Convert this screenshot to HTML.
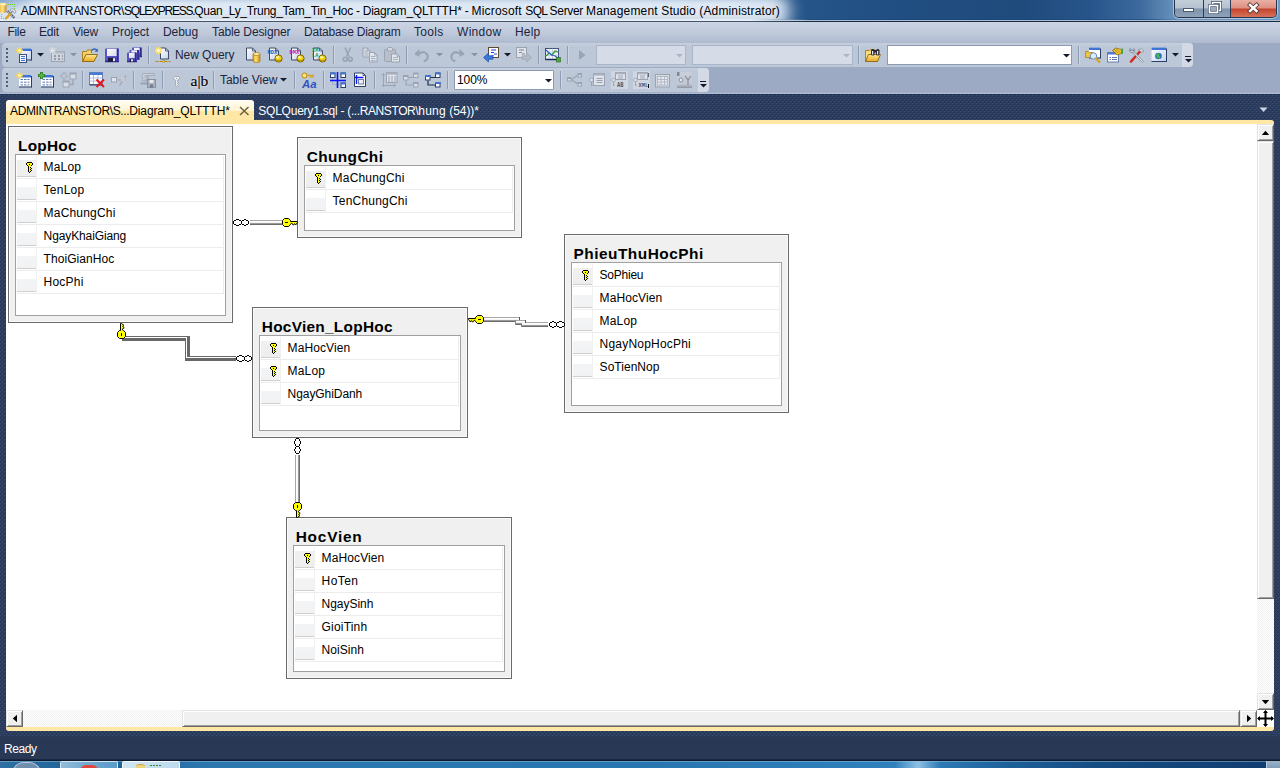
<!DOCTYPE html>
<html lang="en"><head><meta charset="utf-8"><title>Microsoft SQL Server Management Studio</title>
<style>
html,body{margin:0;padding:0;}
body{width:1280px;height:768px;overflow:hidden;position:relative;background:#293955;font-family:"Liberation Sans",sans-serif;font-size:12px;}
.a{position:absolute;}
.t{position:absolute;white-space:pre;font-family:"Liberation Sans",sans-serif;}
svg{position:absolute;overflow:visible;}
.tbl{position:absolute;background:#f0f0f0;border:1px solid #6a6a6a;box-sizing:border-box;box-shadow:inset 0 0 0 1px #fafafa;}
.grid{position:absolute;background:#fff;border:1px solid #a0a0a0;box-sizing:border-box;}
.rh{position:absolute;width:19px;height:20px;background:linear-gradient(#fff 0,#fff 8px,#f3f4f6 8px,#f1f2f4 100%);border-bottom:1px solid #cfcfcf;}
.rh1{background:linear-gradient(#fff 0,#fff 4px,#f0f0f0 4px,#eeeeef 100%);}
.rs{position:absolute;height:1px;background:#ececec;}
.vs{position:absolute;width:1px;background:#f0f0f0;}
.sbtn{position:absolute;width:17px;height:17px;box-sizing:border-box;background:#f0f0f0;border:1px solid;border-color:#e3e3e3 #696969 #696969 #e3e3e3;box-shadow:inset 1px 1px 0 #fff, inset -1px -1px 0 #a0a0a0;}
.sep{position:absolute;width:1px;background:#8d9bb3;box-shadow:1px 0 0 rgba(255,255,255,.28);}

</style></head>
<body>
<svg class="a" style="left:0;top:0" width="1280" height="768"><defs>
<pattern id="dots" width="4" height="4" patternUnits="userSpaceOnUse"><rect width="4" height="4" fill="#2b3c5c"/><rect x="0" y="3" width="1" height="1" fill="#3b4f74"/><rect x="2" y="1" width="1" height="1" fill="#3b4f74"/><rect x="2" y="0" width="1" height="1" fill="#263554"/><rect x="0" y="2" width="1" height="1" fill="#263554"/></pattern>
<pattern id="chk" width="2" height="2" patternUnits="userSpaceOnUse"><rect width="2" height="2" fill="#fff"/><rect x="0" y="0" width="1" height="1" fill="#f0f0f0"/><rect x="1" y="1" width="1" height="1" fill="#f0f0f0"/></pattern>
</defs><rect x="0" y="93" width="1280" height="645" fill="url(#dots)" shape-rendering="crispEdges"/><rect x="0" y="94" width="1280" height="1" fill="#243556"/></svg>
<div class="a" style="left:0;top:0;width:1280px;height:22px;overflow:hidden;background:linear-gradient(90deg,#2b5a90 0,#255589 800px,#214e82 900px,#1f4a7c 1020px,#27548a 1090px,#3d6a9d 1140px,#6790bb 1174px,#6b97c3 1276px,#6f9bc6 1280px)"><div class="a" style="left:-40px;top:-8px;width:830px;height:38px;border-radius:19px;background:#dde8f5;filter:blur(8px)"></div><div class="a" style="left:0;top:0;width:790px;height:20px;background:linear-gradient(rgba(201,216,234,.0) 0,rgba(223,233,245,.9) 5px,rgba(223,233,245,.9) 12px,rgba(210,219,231,.9) 19px);-webkit-mask-image:linear-gradient(90deg,#000 0,#000 730px,transparent 790px);mask-image:linear-gradient(90deg,#000 0,#000 730px,transparent 790px)"></div><div class="a" style="left:0;top:0;width:40px;height:14px;background:radial-gradient(ellipse at 0 0,rgba(120,155,200,.8) 0,rgba(120,155,200,0) 70%)"></div></div>
<div class="a" style="left:0;top:19px;width:1280px;height:1px;background:linear-gradient(90deg,#e4ebf4 0,#e4ebf4 750px,rgba(26,69,120,.6) 810px,rgba(26,69,120,.6) 1150px,rgba(26,69,120,0) 1180px)"></div>
<div class="a" style="left:0;top:20px;width:1280px;height:1px;background:linear-gradient(90deg,#e8eef5 0,#e8eef5 750px,#a9bbd0 810px,#a9bbd0 1280px)"></div>
<div class="a" style="left:0;top:21px;width:1280px;height:1px;background:linear-gradient(90deg,#45566f 0,#45566f 750px,#1c2b42 810px,#1c2b42 1280px)"></div>
<span class="t" style="left:20.80px;top:4.00px;font-size:12px;line-height:15px;font-weight:400;color:#000"><span style="letter-spacing:-0.328px">ADMINTRANSTOR\</span><span style="letter-spacing:-1.250px">SQLEXPRESS.</span><span style="letter-spacing:-0.317px">Quan_Ly_</span><span style="letter-spacing:-0.291px">Trung_Tam_Tin_Hoc - </span><span style="letter-spacing:-0.241px">Diagram_QLTTTH* - </span><span style="letter-spacing:0.178px">Microsoft </span><span style="letter-spacing:-0.652px">SQL </span><span style="letter-spacing:-0.327px">Server </span><span style="letter-spacing:0.174px">Management </span><span style="letter-spacing:0.092px">Studio </span><span style="letter-spacing:0.134px">(Administrator)</span></span>
<div class="a" style="left:1174px;top:0;width:103px;height:18px;border:1px solid #27364d;border-top:none;border-radius:0 0 5px 5px;box-sizing:border-box;overflow:hidden;box-shadow:0 0 0 1px rgba(255,255,255,.45)">
<div class="a" style="left:0;top:0;width:28px;height:17px;background:linear-gradient(#c3ced9 0,#b4c1cf 48%,#7f93ab 52%,#8ea3ba 100%);border-right:1px solid #2c3b52"></div>
<div class="a" style="left:29px;top:0;width:26px;height:17px;background:linear-gradient(#c3ced9 0,#b4c1cf 48%,#7f93ab 52%,#8ea3ba 100%);border-right:1px solid #2c3b52"></div>
<div class="a" style="left:56px;top:0;width:46px;height:17px;background:linear-gradient(#eab0a4 0,#dc8f80 48%,#c5432c 52%,#d5735c 100%)"></div>
</div>
<svg class="a" style="left:1174px;top:0" width="103" height="18">
<rect x="9.5" y="8.5" width="10" height="3" fill="#fff" stroke="#4b5a70"/>
<rect x="38.500" y="2.500" width="8" height="8" fill="none" stroke="#4b5a70" stroke-width="3"/><rect x="38.500" y="2.500" width="8" height="8" fill="none" stroke="#fff" stroke-width="1.4"/>
<rect x="35.5" y="5.5" width="8" height="7" fill="#9aa9bb" stroke="#4b5a70" stroke-width="3"/><rect x="35.5" y="5.5" width="8" height="7" fill="none" stroke="#fff" stroke-width="1.6"/>
<path d="M76 5 L82.500 11 M82.500 5 L76 11" stroke="#5a3a38" stroke-width="4.200" stroke-linecap="square"/><path d="M76 5 L82.500 11 M82.500 5 L76 11" stroke="#fff" stroke-width="2.400" stroke-linecap="square"/>
</svg>
<svg class="a" style="left:0;top:0" width="18" height="20"><defs><linearGradient id="gcy" x1="0" y1="0" x2="1" y2="0"><stop offset="0" stop-color="#f3c64a"/><stop offset=".45" stop-color="#fbe38c"/><stop offset="1" stop-color="#c98e14"/></linearGradient></defs><rect x="8" y="4" width="1" height="1" fill="#6fd626"/><rect x="10" y="4" width="1" height="1" fill="#6fd626"/><rect x="12" y="4" width="1" height="1" fill="#6fd626"/><rect x="14" y="4" width="1" height="1" fill="#6fd626"/><rect x="14" y="6" width="1" height="1" fill="#6fd626"/><rect x="14" y="8" width="1" height="1" fill="#6fd626"/><rect x="1" y="14" width="1" height="1" fill="#6fd626"/><rect x="1" y="16" width="1" height="1" fill="#6fd626"/><rect x="1" y="18" width="1" height="1" fill="#6fd626"/><rect x="3" y="18" width="1" height="1" fill="#6fd626"/>
<path d="M0 4.200a3.200 1.300 0 0 1 6.500 0v7.600a3.200 1.300 0 0 1 -6.500 0z" fill="url(#gcy)"/><ellipse cx="3.200" cy="4.200" rx="3.200" ry="1.300" fill="#fdeeb0"/>
<path d="M7 10.500l7.500 7.500" stroke="#4a5468" stroke-width="2.200"/><path d="M7 10.500l7.500 7.500" stroke="#eef1f6" stroke-width="1.200" stroke-dasharray="1 1"/>
<path d="M10 9.500q2.500 -2 5 .5l1 2.500 -2 .8 -1 -2 -2 .2z" fill="#e9edf3" stroke="#7d8798" stroke-width=".7"/>
<path d="M6 18.500l4.500 -5" stroke="#e0a21c" stroke-width="2.400" stroke-linecap="round"/><path d="M10.500 13.500l2.500 -2.800" stroke="#8d96a6" stroke-width="1.300"/></svg>
<div class="a" style="left:0;top:22px;width:1280px;height:21px;background:linear-gradient(#cbd4e3 0,#c1cadb 50%,#aebacf 100%)"></div>
<span class="t" style="left:7.50px;top:25.00px;font-size:12px;line-height:15px;font-weight:400;color:#1a2540;letter-spacing:-0.336px;">File</span>
<span class="t" style="left:39.00px;top:25.00px;font-size:12px;line-height:15px;font-weight:400;color:#1a2540;letter-spacing:-0.172px;">Edit</span>
<span class="t" style="left:73.00px;top:25.00px;font-size:12px;line-height:15px;font-weight:400;color:#1a2540;letter-spacing:-0.199px;">View</span>
<span class="t" style="left:112.00px;top:25.00px;font-size:12px;line-height:15px;font-weight:400;color:#1a2540;letter-spacing:-0.051px;">Project</span>
<span class="t" style="left:163.00px;top:25.00px;font-size:12px;line-height:15px;font-weight:400;color:#1a2540;letter-spacing:-0.075px;">Debug</span>
<span class="t" style="left:212.00px;top:25.00px;font-size:12px;line-height:15px;font-weight:400;color:#1a2540;letter-spacing:-0.110px;">Table Designer</span>
<span class="t" style="left:304.00px;top:25.00px;font-size:12px;line-height:15px;font-weight:400;color:#1a2540;letter-spacing:-0.223px;">Database Diagram</span>
<span class="t" style="left:414.00px;top:25.00px;font-size:12px;line-height:15px;font-weight:400;color:#1a2540;letter-spacing:0.297px;">Tools</span>
<span class="t" style="left:457.00px;top:25.00px;font-size:12px;line-height:15px;font-weight:400;color:#1a2540;letter-spacing:0.302px;">Window</span>
<span class="t" style="left:515.00px;top:25.00px;font-size:12px;line-height:15px;font-weight:400;color:#1a2540;letter-spacing:0.203px;">Help</span>
<div class="a" style="left:0;top:43px;width:1280px;height:51px;background:#9caac3"></div>
<div class="a" style="left:2px;top:43px;width:1191px;height:24px;border-radius:4px;background:linear-gradient(#c6cfde 0,#bcc7d8 4px,#bcc7d8 100%)"></div>
<div class="a" style="left:2px;top:68px;width:707px;height:24px;border-radius:4px;background:linear-gradient(#c6cfde 0,#bcc7d8 4px,#bcc7d8 100%)"></div>
<div class="a" style="left:1182px;top:43px;width:11px;height:24px;border-radius:0 4px 4px 0;background:#d3dae6"></div>
<div class="a" style="left:698px;top:68px;width:11px;height:24px;border-radius:0 4px 4px 0;background:#d3dae6"></div>
<div class="a" style="left:0;top:92px;width:1280px;height:1px;background:#a3b0c8"></div><div class="a" style="left:0;top:93px;width:1280px;height:1px;background:#aebad0"></div>
<span class="t" style="left:175.00px;top:48.00px;font-size:12px;line-height:15px;font-weight:400;color:#1a2540;letter-spacing:-0.059px;">New Query</span>
<span class="t" style="left:220.00px;top:73.00px;font-size:12px;line-height:15px;font-weight:400;color:#1a2540;letter-spacing:-0.033px;">Table View</span>
<div class="a" style="left:454px;top:70px;width:100px;height:20px;border-radius:1px;box-sizing:border-box;background:#fff;border:1px solid #8c9ab2"></div>
<span class="t" style="left:457.00px;top:73.00px;font-size:12px;line-height:15px;font-weight:400;color:#000;letter-spacing:-0.051px;">100%</span>
<div class="a" style="left:596px;top:45px;width:90px;height:20px;box-sizing:border-box;background:#d5dbe7;border:1px solid #aab5c9"></div>
<div class="a" style="left:692px;top:45px;width:161px;height:20px;box-sizing:border-box;background:#d5dbe7;border:1px solid #aab5c9"></div>
<div class="a" style="left:887px;top:45px;width:185px;height:20px;box-sizing:border-box;background:#fff;border:1px solid #8c9ab2"></div>
<svg class="a" width="0" height="0"><defs><linearGradient id="gsh" x1="0" y1="0" x2="1" y2="1"><stop offset="0" stop-color="#fff"/><stop offset="1" stop-color="#aab4d8"/></linearGradient><linearGradient id="gfold" x1="0" y1="0" x2="0" y2="1"><stop offset="0" stop-color="#ffe89a"/><stop offset="1" stop-color="#e9a81c"/></linearGradient><linearGradient id="gcyl" x1="0" y1="0" x2="1" y2="0"><stop offset="0" stop-color="#d99a10"/><stop offset=".4" stop-color="#ffe27a"/><stop offset="1" stop-color="#d08c0a"/></linearGradient><linearGradient id="gdoc" x1="0" y1="0" x2="1" y2="1"><stop offset="0" stop-color="#ffffff"/><stop offset="1" stop-color="#c5d2ee"/></linearGradient></defs></svg><svg class="a" style="left:6px;top:48px" width="2" height="14" viewBox="0 0 2 14"><rect x="0" y="0" width="2" height="2" fill="#4d5d7c"/><rect x="0" y="4" width="2" height="2" fill="#4d5d7c"/><rect x="0" y="8" width="2" height="2" fill="#4d5d7c"/><rect x="0" y="12" width="2" height="2" fill="#4d5d7c"/></svg><svg class="a" style="left:16px;top:47px" width="16" height="16" viewBox="0 0 16 16"><rect x="5" y="1.5" width="10" height="11" fill="url(#gdoc)"/><rect x="5" y="1.5" width="10" height="2.500" fill="#3f73d6"/><path d="M5 13.0h10.5M15.5 2.5v11" stroke="#2b3f66" fill="none"/><rect x="3.500" y="7.500" width="7" height="8" fill="#f3f6fd" stroke="#3d4f78"/><path d="M5 9.500h4M5 11.500h4M5 13.500h4" stroke="#3f73d6" stroke-width="1"/><path d="M3.5 0.0v7M0.0 3.5h7M1.0 1.0l5 5M6.0 1.0l-5 5" stroke="#ffd84a" stroke-width="1.300"/><circle cx="3.5" cy="3.5" r="1.300" fill="#fff6c2"/></svg><svg class="a" style="left:37px;top:53px" width="7" height="4" viewBox="0 0 7 4"><path d="M0 0h7l-3.500 3.500z" fill="#111a2e"/></svg><svg class="a" style="left:49px;top:47px" width="16" height="16" viewBox="0 0 16 16"><rect x="2.500" y="4.500" width="13" height="10" fill="#cfd4dd" stroke="#9aa3b2"/><rect x="2.500" y="4.500" width="13" height="2" fill="#b4bac6"/><path d="M5 9h2M9 9h2M13 9h1M5 12h2M9 12h2M13 12h1" stroke="#7f8898" stroke-width="1.500"/><path d="M3.5 0.0v7M0.0 3.5h7M1.0 1.0l5 5M6.0 1.0l-5 5" stroke="#d4d8e0" stroke-width="1.300"/><circle cx="3.5" cy="3.5" r="1.300" fill="#e8eaf0"/></svg><svg class="a" style="left:70px;top:53px" width="7" height="4" viewBox="0 0 7 4"><path d="M0 0h7l-3.500 3.500z" fill="#8b93a3"/></svg><svg class="a" style="left:82px;top:47px" width="16" height="16" viewBox="0 0 16 16"><path d="M0.500 14.500V4.500h4l1 -1.500h4v3" fill="#f3cf6a" stroke="#a87a14" stroke-width=".9"/><path d="M0.500 14.500L4 7.500h11.500L12 14.500z" fill="url(#gfold)" stroke="#8a6410" stroke-width=".9"/><path d="M9.500 3.500q3 -3 5.500 0" fill="none" stroke="#2f62b8" stroke-width="1.300"/><path d="M15.800 1.500v3.200h-3.200z" fill="#2f62b8"/></svg><svg class="a" style="left:104px;top:47px" width="16" height="16" viewBox="0 0 16 16"><rect x="1" y="1.5" width="14" height="13.5" rx="0.800" fill="#5a55c8"/><path d="M13.5 1.5v13.5M1 14.5h14" stroke="#2f2a8a" stroke-width="1.500"/><rect x="3" y="2.0" width="9.5" height="7.0" fill="#fff"/><rect x="3" y="2.0" width="9.5" height="7.0" fill="url(#gsh)" opacity=".5"/><rect x="4" y="10.7" width="7.5" height="4.0" fill="#1c1c3a"/><rect x="9" y="11.2" width="2" height="3.0" fill="#e8e8f4"/></svg><svg class="a" style="left:126px;top:47px" width="16" height="16" viewBox="0 0 16 16"><rect x="6" y="0.5" width="10" height="9.5" rx="0.800" fill="#5a55c8"/><path d="M14.5 0.5v9.5M6 9.5h10" stroke="#2f2a8a" stroke-width="1.500"/><rect x="8" y="1.0" width="5.5" height="4.9" fill="#fff"/><rect x="8" y="1.0" width="5.5" height="4.9" fill="url(#gsh)" opacity=".5"/><rect x="9" y="7.0" width="3.5" height="2.9" fill="#1c1c3a"/><rect x="10" y="7.3" width="2" height="2.1" fill="#e8e8f4"/><rect x="3.5" y="3" width="10" height="9.5" rx="0.800" fill="#5a55c8"/><path d="M12.0 3v9.5M3.5 12.0h10" stroke="#2f2a8a" stroke-width="1.500"/><rect x="5.5" y="3.5" width="5.5" height="4.9" fill="#fff"/><rect x="5.5" y="3.5" width="5.5" height="4.9" fill="url(#gsh)" opacity=".5"/><rect x="6.5" y="9.5" width="3.5" height="2.9" fill="#1c1c3a"/><rect x="7.5" y="9.8" width="2" height="2.1" fill="#e8e8f4"/><rect x="1" y="5.5" width="10" height="9.5" rx="0.800" fill="#5a55c8"/><path d="M9.5 5.5v9.5M1 14.5h10" stroke="#2f2a8a" stroke-width="1.500"/><rect x="3" y="6.0" width="5.5" height="4.9" fill="#fff"/><rect x="3" y="6.0" width="5.5" height="4.9" fill="url(#gsh)" opacity=".5"/><rect x="4" y="12.0" width="3.5" height="2.9" fill="#1c1c3a"/><rect x="5" y="12.3" width="2" height="2.1" fill="#e8e8f4"/></svg><div class="sep" style="left:148px;top:46px;height:18px"></div><svg class="a" style="left:155px;top:47px" width="16" height="16" viewBox="0 0 16 16"><path d="M5.5 1.0h5l3 3v8h-8z" fill="url(#gdoc)" stroke="#3f4a63" stroke-width="1"/><path d="M10.5 1.0v3h3" fill="none" stroke="#3f4a63" stroke-width=".8"/><path d="M0.500 14.500h15" stroke="#b8860b" stroke-width="1" stroke-dasharray="3 1 8 1 3"/><path d="M8.500 12.500v2" stroke="#b8860b"/><circle cx="8.500" cy="14.500" r="1.100" fill="#ffe000" stroke="#a87a14" stroke-width=".5"/><path d="M3.5 0.0v7M0.0 3.5h7M1.0 1.0l5 5M6.0 1.0l-5 5" stroke="#ffb400" stroke-width="1.300"/><circle cx="3.5" cy="3.5" r="1.300" fill="#fff2a0"/><circle cx="3.500" cy="3.500" r="2.600" fill="#ffc928" opacity=".75"/><path d="M3.5 0.0v7M0.0 3.5h7M1.0 1.0l5 5M6.0 1.0l-5 5" stroke="#ffe680" stroke-width="1.300"/><circle cx="3.5" cy="3.5" r="1.300" fill="#fff"/></svg><svg class="a" style="left:245px;top:47px" width="16" height="16" viewBox="0 0 16 16"><path d="M1.5 1.0h6l3 3v9h-9z" fill="url(#gdoc)" stroke="#3f4a63" stroke-width="1"/><path d="M7.5 1.0v3h3" fill="none" stroke="#3f4a63" stroke-width=".8"/><path d="M8 7v7a3.500 1.500 0 0 0 7 0v-7z" fill="url(#gcyl)" stroke="#a87a14" stroke-width=".7"/><ellipse cx="11.500" cy="7" rx="3.500" ry="1.500" fill="#ffe9a0" stroke="#a87a14" stroke-width=".7"/></svg><svg class="a" style="left:267px;top:47px" width="16" height="16" viewBox="0 0 16 16"><path d="M2.5 1.0h6l3 3v9h-9z" fill="url(#gdoc)" stroke="#3f4a63" stroke-width="1"/><path d="M8.5 1.0v3h3" fill="none" stroke="#3f4a63" stroke-width=".8"/><text x="0.5" y="6.5" font-family="Liberation Mono,monospace" font-weight="700" font-size="6" fill="#1c5cc0" textLength="9.6" lengthAdjust="spacingAndGlyphs">MDX</text><circle cx="11.5" cy="11.5" r="3.6" fill="#f2d20a" stroke="#7a5c00" stroke-width=".9"/><ellipse cx="10.7" cy="10.3" rx="1.700" ry="1.100" fill="#fff9b0"/><path d="M7.9 12.0a3.6 1.600 0 0 0 7.2 0" fill="none" stroke="#7a5c00" stroke-width=".6"/></svg><svg class="a" style="left:289px;top:47px" width="16" height="16" viewBox="0 0 16 16"><path d="M2.5 1.0h6l3 3v9h-9z" fill="url(#gdoc)" stroke="#3f4a63" stroke-width="1"/><path d="M8.5 1.0v3h3" fill="none" stroke="#3f4a63" stroke-width=".8"/><text x="0.5" y="6.5" font-family="Liberation Mono,monospace" font-weight="700" font-size="6" fill="#c020b0" textLength="9.6" lengthAdjust="spacingAndGlyphs">DMX</text><circle cx="11.5" cy="11.5" r="3.6" fill="#f2d20a" stroke="#7a5c00" stroke-width=".9"/><ellipse cx="10.7" cy="10.3" rx="1.700" ry="1.100" fill="#fff9b0"/><path d="M7.9 12.0a3.6 1.600 0 0 0 7.2 0" fill="none" stroke="#7a5c00" stroke-width=".6"/></svg><svg class="a" style="left:311px;top:47px" width="16" height="16" viewBox="0 0 16 16"><path d="M2.5 1.0h6l3 3v9h-9z" fill="url(#gdoc)" stroke="#3f4a63" stroke-width="1"/><path d="M8.5 1.0v3h3" fill="none" stroke="#3f4a63" stroke-width=".8"/><text x="1" y="5" font-family="Liberation Mono,monospace" font-weight="700" font-size="5.5" fill="#1f9a50" textLength="6.4" lengthAdjust="spacingAndGlyphs">XM</text><text x="1" y="10" font-family="Liberation Mono,monospace" font-weight="700" font-size="5.5" fill="#1f9a50" textLength="6.4" lengthAdjust="spacingAndGlyphs">LA</text><circle cx="11.5" cy="11.5" r="3.6" fill="#f2d20a" stroke="#7a5c00" stroke-width=".9"/><ellipse cx="10.7" cy="10.3" rx="1.700" ry="1.100" fill="#fff9b0"/><path d="M7.9 12.0a3.6 1.600 0 0 0 7.2 0" fill="none" stroke="#7a5c00" stroke-width=".6"/></svg><div class="sep" style="left:333px;top:46px;height:18px"></div><svg class="a" style="left:341px;top:47px" width="16" height="16" viewBox="0 0 16 16"><path d="M4 0.500L7.800 9.500M9.500 0.500L5.700 9.500" stroke="#9aa3b2" stroke-width="1.600" fill="none"/><circle cx="4.200" cy="12.200" r="1.900" fill="none" stroke="#9aa3b2" stroke-width="1.600"/><circle cx="9.300" cy="12.200" r="1.900" fill="none" stroke="#9aa3b2" stroke-width="1.600"/></svg><svg class="a" style="left:362px;top:47px" width="16" height="16" viewBox="0 0 16 16"><path d="M1.0 1.0h4.5l2.5 2.5v6.5h-7z" fill="#d9dde6" stroke="#9aa3b2" stroke-width="1"/><path d="M5.5 1.0v2.5h2.5" fill="none" stroke="#9aa3b2" stroke-width=".8"/><path d="M2.500 4h4M2.500 6h4M2.500 8h4" stroke="#9aa3b2" stroke-width=".8"/><path d="M7.5 5.5h5.0l2.5 2.5v7.0h-7.5z" fill="#e1e5ec" stroke="#9aa3b2" stroke-width="1"/><path d="M12.5 5.5v2.5h2.5" fill="none" stroke="#9aa3b2" stroke-width=".8"/><path d="M9 9.500h4.500M9 11.500h4.500M9 13.500h4.500" stroke="#9aa3b2" stroke-width=".8"/></svg><svg class="a" style="left:384px;top:47px" width="16" height="16" viewBox="0 0 16 16"><rect x="0.500" y="2.500" width="11" height="12" rx="1" fill="#b9bfca" stroke="#9aa3b2"/><rect x="3.500" y="0.500" width="5" height="3.500" rx="1" fill="#d5d9e1" stroke="#9aa3b2"/><path d="M7.5 7.0h5.5l2.5 2.5v5.5h-8z" fill="#e1e5ec" stroke="#9aa3b2" stroke-width="1"/><path d="M13.0 7.0v2.5h2.5" fill="none" stroke="#9aa3b2" stroke-width=".8"/><path d="M9 10.500h5M9 12.500h5" stroke="#9aa3b2" stroke-width=".8"/></svg><div class="sep" style="left:406px;top:46px;height:18px"></div><svg class="a" style="left:414px;top:47px" width="16" height="16" viewBox="0 0 16 16"><path d="M2 5.500h6.500a4.500 4.500 0 0 1 0 9h-1" fill="none" stroke="#9aa3b2" stroke-width="2.200" transform="rotate(-20 8 8)"/><path d="M0.500 6.500l5 -4.500v8z" fill="#9aa3b2"/></svg><svg class="a" style="left:436px;top:53px" width="7" height="4" viewBox="0 0 7 4"><path d="M0 0h7l-3.500 3.500z" fill="#8b93a3"/></svg><svg class="a" style="left:449px;top:47px" width="16" height="16" viewBox="0 0 16 16"><path d="M14 5.500h-6.500a4.500 4.500 0 0 0 0 9h1" fill="none" stroke="#9aa3b2" stroke-width="2.200" transform="rotate(20 8 8)"/><path d="M15.500 6.500l-5 -4.500v8z" fill="#9aa3b2"/></svg><svg class="a" style="left:471px;top:53px" width="7" height="4" viewBox="0 0 7 4"><path d="M0 0h7l-3.500 3.500z" fill="#8b93a3"/></svg><svg class="a" style="left:483px;top:47px" width="16" height="16" viewBox="0 0 16 16"><rect x="5.500" y="0.500" width="10" height="10" fill="#fff" stroke="#5a4a32"/><path d="M8 3h5M8 5.500h3M11 7h3" stroke="#1c3fe0" stroke-width="1.200"/><path d="M8 8.500h3" stroke="#9aa" stroke-width="1"/><path d="M0.500 10.500l5 -4.500v2.800h4.500v3.400h-4.500v2.800z" fill="#3b78d8" stroke="#1d4fa8" stroke-width=".7"/></svg><svg class="a" style="left:504px;top:53px" width="7" height="4" viewBox="0 0 7 4"><path d="M0 0h7l-3.500 3.500z" fill="#111a2e"/></svg><svg class="a" style="left:516px;top:47px" width="16" height="16" viewBox="0 0 16 16"><rect x="0.500" y="0.500" width="10" height="10" fill="#dfe3ea" stroke="#9aa3b2"/><path d="M3 3h5M3 5.500h3M6 7h3" stroke="#7f8898" stroke-width="1.100"/><path d="M15.500 10.500l-5 -4.500v2.800h-4.500v3.400h4.500v2.800z" fill="#b4bac6" stroke="#9aa3b2" stroke-width=".7"/></svg><div class="sep" style="left:538px;top:46px;height:18px"></div><svg class="a" style="left:545px;top:47px" width="16" height="16" viewBox="0 0 16 16"><rect x="0.500" y="1.500" width="13" height="11" fill="#f6f8fc" stroke="#3b4d78"/><path d="M0.500 5h13M0.500 8.500h13M4 1.500v11M7.500 1.500v11M11 1.500v11" stroke="#b7c3dc" stroke-width=".7"/><path d="M0.500 12.500h13.500" stroke="#1d2c52" stroke-width="1.500"/><path d="M1 9l3 -3 3 2 3 -4 3 1" fill="none" stroke="#2f9a30" stroke-width="1.300"/><path d="M1 3l3 3 3 2 3 1 3 2" fill="none" stroke="#2f62d8" stroke-width="1.200"/><rect x="11.500" y="10.500" width="4" height="4.500" fill="#4fa83a" stroke="#2a6a1c" stroke-width=".6"/></svg><div class="sep" style="left:567px;top:46px;height:18px"></div><svg class="a" style="left:578px;top:47px" width="8" height="16" viewBox="0 0 8 16"><path d="M1 3v10l6.500 -5z" fill="#9aa3b2"/></svg><svg class="a" style="left:676px;top:54px" width="7" height="4" viewBox="0 0 7 4"><path d="M0 0h7l-3.500 3.500z" fill="#aeb6c6"/></svg><svg class="a" style="left:843px;top:54px" width="7" height="4" viewBox="0 0 7 4"><path d="M0 0h7l-3.500 3.500z" fill="#aeb6c6"/></svg><div class="sep" style="left:858px;top:46px;height:18px"></div><svg class="a" style="left:865px;top:47px" width="16" height="16" viewBox="0 0 16 16"><path d="M0.500 14.500V3.500h4l1 -1h4v3" fill="#f7dc7e" stroke="#a87a14" stroke-width=".9"/><path d="M0.500 14.500L3.500 7.500h12L12.500 14.500z" fill="url(#gfold)" stroke="#8a6410" stroke-width=".9"/><rect x="6" y="2" width="3.500" height="6.500" rx="1.500" fill="#2b2b33"/><rect x="11" y="2" width="3.500" height="6.500" rx="1.500" fill="#2b2b33"/><rect x="9" y="3" width="2.500" height="2.500" fill="#2b2b33"/><rect x="7" y="4" width="1.200" height="3.500" fill="#e9eef6"/><rect x="12" y="4" width="1.200" height="3.500" fill="#e9eef6"/></svg><svg class="a" style="left:1063px;top:54px" width="7" height="4" viewBox="0 0 7 4"><path d="M0 0h7l-3.500 3.500z" fill="#111a2e"/></svg><div class="sep" style="left:1078px;top:46px;height:18px"></div><svg class="a" style="left:1085px;top:47px" width="16" height="16" viewBox="0 0 16 16"><rect x="4" y="0.5" width="11" height="10" fill="#fff"/><rect x="4" y="0.5" width="11" height="2.500" fill="#3f73d6"/><path d="M4 11.0h11.5M15.5 1.5v10" stroke="#2b3f66" fill="none"/><path d="M0.500 4.500h3l1 1h3.500v5h-7.500z" fill="#f0c040" stroke="#a87a14" stroke-width=".7"/><circle cx="8.500" cy="9" r="3.200" fill="#d8ecfb" stroke="#6f8fb8" stroke-width="1"/><path d="M11 11.500l3.500 3.500" stroke="#d6a320" stroke-width="2.200" stroke-linecap="round"/></svg><svg class="a" style="left:1107px;top:47px" width="16" height="16" viewBox="0 0 16 16"><rect x="0.500" y="5.500" width="11" height="9.500" fill="#fff" stroke="#6a7fa8"/><rect x="0.500" y="5.500" width="11" height="2" fill="#4a7ad8"/><path d="M2.500 10.500h1.500M5 10.500h5M2.500 12.500h1.500M5 12.500h5" stroke="#5b79b5" stroke-width="1"/><path d="M5.500 3.500l3 -2.500 6 1.500v4l-4.500 1.500z" fill="#f2c52e" stroke="#8a6410" stroke-width=".7"/><path d="M5.500 3.500l4 3.500M7 2l4 4M9 1.500l4 4" stroke="#8a6410" stroke-width=".6"/><rect x="14.500" y="1.500" width="1.500" height="5.500" fill="#3aa84a"/></svg><svg class="a" style="left:1129px;top:47px" width="16" height="16" viewBox="0 0 16 16"><path d="M2 14.500l9 -10" stroke="#d42a20" stroke-width="2.600" stroke-linecap="round"/><path d="M2.500 3l11 11.500" stroke="#8f98a8" stroke-width="2.200" stroke-linecap="round"/><path d="M2.500 3l11 11.500" stroke="#f1f3f7" stroke-width=".9" stroke-linecap="round"/><path d="M9.500 2.500q3 -2 5.500 1.500l-2 1.500q-1 -2 -3 -1.500z" fill="#dfe4ec" stroke="#7a8498" stroke-width=".7"/><path d="M1 1.500a2.600 2.600 0 1 0 4 0v2h-4z" fill="#c9cfda" stroke="#7a8498" stroke-width=".7"/></svg><svg class="a" style="left:1151px;top:47px" width="16" height="16" viewBox="0 0 16 16"><rect x="0.5" y="0.5" width="14.5" height="13.5" fill="url(#gdoc)"/><rect x="0.5" y="0.5" width="14.5" height="2.500" fill="#3f73d6"/><path d="M0.5 14.5h15.0M15.5 1.5v13.5" stroke="#2b3f66" fill="none"/><circle cx="7.500" cy="9" r="3.300" fill="#2f66d0"/><path d="M5 8q1.500 -2.500 3.500 -2l-0.500 2.500 1.500 1 -1 2.500q-2.500 0 -3.500 -4z" fill="#3fb848"/></svg><svg class="a" style="left:1172px;top:53px" width="7" height="4" viewBox="0 0 7 4"><path d="M0 0h7l-3.500 3.500z" fill="#111a2e"/></svg><svg class="a" style="left:1185px;top:56px" width="7" height="8" viewBox="0 0 7 8"><path d="M0 0.500h6" stroke="#111a2e" stroke-width="1"/><path d="M0 3h7l-3.500 3.500z" fill="#111a2e"/></svg><svg class="a" style="left:6px;top:73px" width="2" height="14" viewBox="0 0 2 14"><rect x="0" y="0" width="2" height="2" fill="#4d5d7c"/><rect x="0" y="4" width="2" height="2" fill="#4d5d7c"/><rect x="0" y="8" width="2" height="2" fill="#4d5d7c"/><rect x="0" y="12" width="2" height="2" fill="#4d5d7c"/></svg><svg class="a" style="left:16px;top:72px" width="16" height="16" viewBox="0 0 16 16"><rect x="3" y="3" width="12" height="11.5" fill="#fff"/><rect x="3" y="3" width="12" height="2.500" fill="#3f73d6"/><path d="M4.5 7.5h2.500M8 7.5h2.500M11.5 7.5h2" stroke="#5b79b5" stroke-width="1"/><path d="M4.5 10.2h2.500M8 10.2h2.500M11.5 10.2h2" stroke="#5b79b5" stroke-width="1"/><path d="M4.5 12.9h2.500M8 12.9h2.500M11.5 12.9h2" stroke="#5b79b5" stroke-width="1"/><path d="M3 15.0h12.5M15.5 4v11.5" stroke="#2b3f66" stroke-width="1" fill="none"/><path d="M3.5 0.0v7M0.0 3.5h7M1.0 1.0l5 5M6.0 1.0l-5 5" stroke="#ffd84a" stroke-width="1.300"/><circle cx="3.5" cy="3.5" r="1.300" fill="#fff6c2"/></svg><svg class="a" style="left:38px;top:72px" width="16" height="16" viewBox="0 0 16 16"><rect x="3" y="3" width="12" height="11.5" fill="#fff"/><rect x="3" y="3" width="12" height="2.500" fill="#3f73d6"/><path d="M4.5 7.5h2.500M8 7.5h2.500M11.5 7.5h2" stroke="#5b79b5" stroke-width="1"/><path d="M4.5 10.2h2.500M8 10.2h2.500M11.5 10.2h2" stroke="#5b79b5" stroke-width="1"/><path d="M4.5 12.9h2.500M8 12.9h2.500M11.5 12.9h2" stroke="#5b79b5" stroke-width="1"/><path d="M3 15.0h12.5M15.5 4v11.5" stroke="#2b3f66" stroke-width="1" fill="none"/><path d="M3.500 0v7M0 3.500h7" stroke="#2f7d2a" stroke-width="3"/><path d="M3.500 0.800v5.400M0.800 3.500h5.400" stroke="#58c04a" stroke-width="1.400"/></svg><svg class="a" style="left:60px;top:72px" width="16" height="16" viewBox="0 0 16 16"><path d="M4 0.500v7M0.500 4h7" stroke="#9aa3b2" stroke-width="2.600"/><path d="M4 1.500v5M1.500 4h5" stroke="#d4d8df" stroke-width="1"/><rect x="10.0" y="1.0" width="6" height="6" fill="#d9dde5" stroke="#9aa3b2"/><rect x="10.0" y="1.0" width="6" height="1.500" fill="#9aa3b2"/><rect x="3.0" y="9.0" width="6" height="6" fill="#d9dde5" stroke="#9aa3b2"/><rect x="3.0" y="9.0" width="6" height="1.500" fill="#9aa3b2"/><path d="M13 7.500v5h-3.500" fill="none" stroke="#9aa3b2" stroke-width="1.300"/></svg><div class="sep" style="left:82px;top:71px;height:18px"></div><svg class="a" style="left:89px;top:72px" width="16" height="16" viewBox="0 0 16 16"><rect x="0.500" y="0.500" width="13" height="12" fill="#fff" stroke="#6a7fa8"/><rect x="0.500" y="0.500" width="13" height="2.500" fill="#4a7ad8"/><path d="M0.500 6h13M0.500 9h13M4.500 3v9.500M9 3v9.500" stroke="#9fb1d4" stroke-width=".8"/><path d="M0.500 13h13.500" stroke="#2b3f66"/><path d="M7.500 7.500l7.500 7.500M15 7.500l-7.500 7.500" stroke="#e8141c" stroke-width="2"/></svg><svg class="a" style="left:111px;top:72px" width="16" height="16" viewBox="0 0 16 16"><rect x="0.500" y="5.500" width="5" height="4.500" fill="#dfe3ea" stroke="#9aa3b2"/><path d="M7 8h8" stroke="#9aa3b2" stroke-width="1"/><path d="M8.500 13.500l6.500 -10" stroke="#9aa3b2" stroke-width="1.300"/><rect x="10" y="5.500" width="4" height="4" fill="#cfd4dd" opacity=".7"/></svg><div class="sep" style="left:133px;top:71px;height:18px"></div><svg class="a" style="left:140px;top:72px" width="16" height="16" viewBox="0 0 16 16"><path d="M4 1.500h9q2 0 1.500 2h-8q2 3 0 5.500h-4.500q2 -3 0 -5.500q0 -2 2 -2z" fill="#ccd1da" stroke="#9aa3b2" stroke-width=".8"/><path d="M4 4h5M4.500 6h5M4 8h4" stroke="#9aa3b2" stroke-width=".7"/><path d="M0.500 11.500h8" stroke="#9aa3b2" stroke-width="2"/><rect x="7.500" y="7.500" width="8" height="8" fill="#a9b0bd" stroke="#7f8898" stroke-width=".8"/><rect x="9.500" y="8" width="4" height="3" fill="#e4e7ed"/><rect x="10" y="12.500" width="3" height="3" fill="#737c8c"/></svg><div class="sep" style="left:162px;top:71px;height:18px"></div><svg class="a" style="left:173px;top:76px" width="7" height="11" viewBox="0 0 7 11"><g shape-rendering="crispEdges"><path d="M1 0h5v1h1v2h-1v1h-1v2h1v1h-1v1h1v1h-1v1h-1v1h-1v-1h-1v-6h-1v-1h-1v-2h1z" fill="#a9afbb"/><path d="M1 1h5v2h-1v1h-1v2h1v1h-1v1h1v1h-1v1h-1v-6h-1v-1h-1z" fill="#e6e9ee"/><rect x="3" y="2" width="1" height="1" fill="#a9afbb"/></g></svg><span class="t" style="left:190.5px;top:71px;font-family:'Liberation Serif',serif;font-size:15.5px;line-height:20px;color:#000;-webkit-text-stroke:.15px #000;text-shadow:0 0 2px #e6ebf3,0 0 2px #e6ebf3">a|b</span><div class="sep" style="left:213px;top:71px;height:18px"></div><svg class="a" style="left:280px;top:78px" width="7" height="4" viewBox="0 0 7 4"><path d="M0 0h7l-3.500 3.500z" fill="#111a2e"/></svg><div class="sep" style="left:294px;top:71px;height:18px"></div><svg class="a" style="left:301px;top:72px" width="16" height="16" viewBox="0 0 16 16"><circle cx="3.500" cy="3.500" r="2.500" fill="#ffe27a" stroke="#b8860b" stroke-width="1"/><path d="M5.500 3.500h7.500M10 3.500v2.200M12 3.500v2.200" stroke="#d6a320" stroke-width="1.400"/><text x="1" y="15.500" font-family="Liberation Sans,sans-serif" font-style="italic" font-weight="700" font-size="11.500" fill="#2f52c0" textLength="14.500" lengthAdjust="spacingAndGlyphs">Aa</text></svg><div class="sep" style="left:323px;top:71px;height:18px"></div><svg class="a" style="left:330px;top:72px" width="16" height="16" viewBox="0 0 16 16"><rect x="0.5" y="1.0" width="4.5" height="4.5" fill="#fff" stroke="#2b3f66"/><rect x="0" y="0.5" width="5.5" height="2" fill="#3f73d6"/><rect x="11.0" y="1.0" width="4.5" height="4.5" fill="#fff" stroke="#2b3f66"/><rect x="10.5" y="0.5" width="5.5" height="2" fill="#3f73d6"/><rect x="11.0" y="11.0" width="4.5" height="4.5" fill="#fff" stroke="#2b3f66"/><rect x="10.5" y="10.5" width="5.5" height="2" fill="#3f73d6"/><path d="M2.500 6v6.500h8" fill="none" stroke="#9fb1d4"/><path d="M7.500 0v16M0 8.500h16" stroke="#0a14ff" stroke-width="1.600"/></svg><svg class="a" style="left:353px;top:72px" width="16" height="16" viewBox="0 0 16 16"><path d="M1.5 1.0h8.5l2.5 2.5v11.0h-11z" fill="#fff" stroke="#2b3f66" stroke-width="1"/><path d="M10.0 1.0v2.5h2.5" fill="none" stroke="#2b3f66" stroke-width=".8"/><rect x="5.500" y="7.500" width="5" height="4.500" fill="#e9eef8" stroke="#6a7fa8"/><path d="M3.500 3v9M2 5.500h8.500" stroke="#0a14ff" stroke-width="1.400"/></svg><div class="sep" style="left:374px;top:71px;height:18px"></div><svg class="a" style="left:381px;top:72px" width="16" height="16" viewBox="0 0 16 16"><rect x="5.500" y="0.500" width="10.500" height="10" fill="#dfe3ea" stroke="#9aa3b2"/><rect x="5.500" y="0.500" width="10.500" height="2.200" fill="#aab1be"/><path d="M7 5h2M10 5h2M13 5h2M7 7h2M10 7h2M13 7h2M7 9h2M10 9h2M13 9h2" stroke="#9aa3b2" stroke-width="1"/><path d="M2.500 1.500v13.500M1 13.500h13.500M1 3.500l1.500 -2 1.500 2M12.500 12l2 1.500-2 1.500" fill="none" stroke="#9aa3b2" stroke-width="1"/></svg><svg class="a" style="left:403px;top:72px" width="16" height="16" viewBox="0 0 16 16"><rect x="0.5" y="3.5" width="4.5" height="4.5" fill="#d9dde5" stroke="#9aa3b2"/><rect x="0.5" y="3.5" width="4.5" height="1.500" fill="#9aa3b2"/><rect x="10.5" y="1.0" width="4.5" height="4.5" fill="#d9dde5" stroke="#9aa3b2"/><rect x="10.5" y="1.0" width="4.5" height="1.500" fill="#9aa3b2"/><rect x="10.5" y="10.5" width="4.5" height="4.5" fill="#d9dde5" stroke="#9aa3b2"/><rect x="10.5" y="10.5" width="4.5" height="1.500" fill="#9aa3b2"/><path d="M5.500 5.500h4.500M3 8.500v4.500h7" fill="none" stroke="#9aa3b2" stroke-width="1.200"/></svg><svg class="a" style="left:425px;top:72px" width="16" height="16" viewBox="0 0 16 16"><rect x="0.5" y="3.5" width="4.5" height="4.5" fill="#fff" stroke="#2b3f66"/><rect x="0" y="3" width="5.5" height="2" fill="#3f73d6"/><rect x="10.5" y="1.0" width="4.5" height="4.5" fill="#fff" stroke="#2b3f66"/><rect x="10" y="0.5" width="5.5" height="2" fill="#3f73d6"/><rect x="10.5" y="10.5" width="4.5" height="4.5" fill="#fff" stroke="#2b3f66"/><rect x="10" y="10" width="5.5" height="2" fill="#3f73d6"/><path d="M5.500 5.500h4.500M3 8.500v4.500h7" fill="none" stroke="#1d2c52" stroke-width="1.200"/></svg><div class="sep" style="left:447px;top:71px;height:18px"></div><svg class="a" style="left:545px;top:79px" width="7" height="4" viewBox="0 0 7 4"><path d="M0 0h7l-3.500 3.500z" fill="#111a2e"/></svg><div class="sep" style="left:560px;top:71px;height:18px"></div><svg class="a" style="left:567px;top:72px" width="16" height="16" viewBox="0 0 16 16"><rect x="0.5" y="5.5" width="3.5" height="3.5" fill="#d9dde5" stroke="#9aa3b2"/><rect x="0.5" y="5.5" width="3.5" height="1.500" fill="#9aa3b2"/><rect x="11.0" y="1.5" width="3.5" height="3.5" fill="#d9dde5" stroke="#9aa3b2"/><rect x="11.0" y="1.5" width="3.5" height="1.500" fill="#9aa3b2"/><rect x="11.0" y="10.5" width="3.5" height="3.5" fill="#d9dde5" stroke="#9aa3b2"/><rect x="11.0" y="10.5" width="3.5" height="1.500" fill="#9aa3b2"/><path d="M4.500 7.500l6 -4M4.500 7.500l6 4.500" stroke="#9aa3b2" stroke-width="1.200"/></svg><svg class="a" style="left:589px;top:72px" width="16" height="16" viewBox="0 0 16 16"><rect x="4.500" y="1.500" width="11" height="12" fill="#dfe3ea" stroke="#9aa3b2"/><rect x="4.500" y="1.500" width="11" height="2" fill="#aab1be"/><path d="M7.500 6.500h6M7.500 8.500h6M7.500 10.500h6" stroke="#9aa3b2" stroke-width="1"/><circle cx="2.500" cy="8" r="1.800" fill="#e3e6ec" stroke="#9aa3b2" stroke-width=".9"/><path d="M2.500 10v4l1.200 -1" stroke="#9aa3b2" fill="none"/></svg><div class="a" style="left:611px;top:71px;width:17px;height:18px;background:#d0d7e3"></div><div class="a" style="left:633px;top:71px;width:17px;height:18px;background:#d0d7e3"></div><svg class="a" style="left:611px;top:72px" width="16" height="16" viewBox="0 0 16 16"><rect x="4.500" y="0.500" width="10" height="7" fill="#dfe3ea" stroke="#9aa3b2"/><rect x="4.500" y="0.500" width="10" height="1.800" fill="#aab1be"/><path d="M7 4h5M7 6h5" stroke="#9aa3b2" stroke-width=".9"/><circle cx="2.500" cy="8" r="1.800" fill="#e3e6ec" stroke="#9aa3b2" stroke-width=".9"/><path d="M2.500 10v4l1.200 -1" stroke="#9aa3b2" fill="none"/><text x="6" y="15" font-family="Liberation Mono,monospace" font-weight="700" font-size="7" fill="#4f5868" textLength="6.4" lengthAdjust="spacingAndGlyphs">AB</text></svg><svg class="a" style="left:633px;top:72px" width="16" height="16" viewBox="0 0 16 16"><rect x="4.500" y="0.500" width="10" height="7" fill="#dfe3ea" stroke="#9aa3b2"/><rect x="4.500" y="0.500" width="10" height="1.800" fill="#aab1be"/><path d="M7 4h5M7 6h5" stroke="#9aa3b2" stroke-width=".9"/><circle cx="2.500" cy="8" r="1.800" fill="#e3e6ec" stroke="#9aa3b2" stroke-width=".9"/><path d="M2.500 10v4l1.200 -1" stroke="#9aa3b2" fill="none"/><text x="5.5" y="15" font-family="Liberation Mono,monospace" font-weight="700" font-size="6" fill="#4f5868" textLength="9.6" lengthAdjust="spacingAndGlyphs">XML</text><rect x="15" y="1" width="1" height="4" fill="#5b6472"/><rect x="15" y="12" width="1" height="4" fill="#111"/></svg><svg class="a" style="left:655px;top:72px" width="16" height="16" viewBox="0 0 16 16"><rect x="0.500" y="2.500" width="14" height="12.500" fill="#d4d9e2" stroke="#9aa3b2"/><rect x="2.500" y="4.500" width="10" height="8.500" fill="#e6e9ef" stroke="#aab1be" stroke-width=".8"/><path d="M2.500 7.500h10M2.500 10h10M6 4.500v8.500M9.500 4.500v8.500" stroke="#aab1be" stroke-width=".8"/></svg><div class="a" style="left:677px;top:72px;width:15px;height:16px;background:linear-gradient(#c9ced8 0,#c4c9d3 75%,#8f96a3 100%)"></div><svg class="a" style="left:677px;top:72px" width="16" height="16" viewBox="0 0 16 16"><rect x="0" y="0" width="2.500" height="4" fill="#7f8796"/><circle cx="4" cy="8" r="2" fill="#e3e6ec" stroke="#7f8898" stroke-width=".9"/><path d="M8 4l3 4v5M14 4l-3 4" stroke="#7f8898" fill="none" stroke-width="1.100"/></svg><svg class="a" style="left:700px;top:81px" width="7" height="8" viewBox="0 0 7 8"><path d="M0 0.500h6" stroke="#111a2e" stroke-width="1"/><path d="M0 3h7l-3.500 3.500z" fill="#111a2e"/></svg>
<div class="a" style="left:6px;top:100px;width:248px;height:21px;border-radius:3px 3px 0 0;background:linear-gradient(#fffdf5 0,#fff4d0 50%,#ffe8a6 52%,#ffe8a6 100%)"></div>
<div class="a" style="left:6px;top:120px;width:1268px;height:4px;background:#ffe8a6;border-radius:0 3px 0 0"></div>
<span class="t" style="left:10.00px;top:104.00px;font-size:12px;line-height:15px;font-weight:400;color:#000"><span style="letter-spacing:-0.361px">ADMINTRANSTOR\S...</span><span style="letter-spacing:-0.138px">Diagram_QLTTTH*</span></span>
<svg class="a" style="left:239px;top:106px" width="11" height="10"><path d="M1 1 L9.500 9 M9.500 1 L1 9" stroke="#6d6241" stroke-width="1.500" fill="none"/></svg>
<span class="t" style="left:258.30px;top:104.00px;font-size:12px;line-height:15px;font-weight:400;color:#fff"><span style="letter-spacing:-0.231px">SQLQuery1.sql - </span><span style="letter-spacing:-0.400px">(...RANSTOR\</span><span style="letter-spacing:0.194px">hung </span><span style="letter-spacing:-0.086px">(54))*</span></span>
<svg class="a" style="left:1259px;top:107px" width="10" height="6"><path d="M0.500 0.500 h8 l-4 4.500z" fill="#ced5e1"/></svg>
<div class="a" style="left:6px;top:124px;width:1268px;height:603px;background:#fff"></div>
<div class="a" style="left:6px;top:727px;width:1268px;height:4px;background:#ffe8a6;border-radius:0 0 3px 3px"></div>
<svg class="a" style="left:0;top:0" width="0" height="0"><defs>
<g id="pk" shape-rendering="crispEdges"><path d="M1 0h5v1h1v2h-1v1h-1v2h1v1h-1v1h1v1h-1v1h-1v1h-1v-1h-1v-6h-1v-1h-1v-2h1z" fill="#000"/><path d="M1 1h5v2h-1v1h-1v2h1v1h-1v1h1v1h-1v1h-1v-6h-1v-1h-1z" fill="#ffff00"/><rect x="3" y="2" width="1" height="1" fill="#000"/><rect x="4" y="4" width="1" height="1" fill="#ffff00"/></g>
</defs></svg>
<div class="tbl" style="left:8px;top:126px;width:225px;height:197px"></div><span class="t" style="left:18.00px;top:136.00px;font-size:15.4px;line-height:19px;font-weight:700;color:#000;letter-spacing:0.253px;">LopHoc</span>
<div class="grid" style="left:15px;top:154px;width:211px;height:162px"></div><div class="rh rh1" style="left:17px;top:156px"></div><div class="rs" style="left:17px;top:178px;width:206px"></div><span class="t" style="left:43.60px;top:160.00px;font-size:12px;line-height:15px;font-weight:400;color:#000;letter-spacing:0.179px;">MaLop</span>
<svg class="a" style="left:26px;top:162px" width="7" height="11"><use href="#pk"/></svg><div class="rh" style="left:17px;top:179px"></div><div class="rs" style="left:17px;top:201px;width:206px"></div><span class="t" style="left:43.60px;top:183.00px;font-size:12px;line-height:15px;font-weight:400;color:#000;letter-spacing:0.238px;">TenLop</span>
<div class="rh" style="left:17px;top:202px"></div><div class="rs" style="left:17px;top:224px;width:206px"></div><span class="t" style="left:43.60px;top:206.00px;font-size:12px;line-height:15px;font-weight:400;color:#000;letter-spacing:0.185px;">MaChungChi</span>
<div class="rh" style="left:17px;top:225px"></div><div class="rs" style="left:17px;top:247px;width:206px"></div><span class="t" style="left:43.60px;top:229.00px;font-size:12px;line-height:15px;font-weight:400;color:#000;letter-spacing:-0.113px;">NgayKhaiGiang</span>
<div class="rh" style="left:17px;top:248px"></div><div class="rs" style="left:17px;top:270px;width:206px"></div><span class="t" style="left:43.60px;top:252.00px;font-size:12px;line-height:15px;font-weight:400;color:#000;letter-spacing:0.061px;">ThoiGianHoc</span>
<div class="rh" style="left:17px;top:271px"></div><div class="rs" style="left:17px;top:293px;width:206px"></div><span class="t" style="left:43.60px;top:275.00px;font-size:12px;line-height:15px;font-weight:400;color:#000;letter-spacing:0.219px;">HocPhi</span>
<div class="vs" style="left:36px;top:156px;height:138px"></div><div class="vs" style="left:223px;top:156px;height:138px;background:#ececec"></div>
<div class="tbl" style="left:297px;top:137px;width:225px;height:101px"></div><span class="t" style="left:306.80px;top:147.00px;font-size:15.4px;line-height:19px;font-weight:700;color:#000;letter-spacing:0.373px;">ChungChi</span>
<div class="grid" style="left:304px;top:165px;width:211px;height:66px"></div><div class="rh rh1" style="left:306px;top:167px"></div><div class="rs" style="left:306px;top:189px;width:206px"></div><span class="t" style="left:332.60px;top:171.00px;font-size:12px;line-height:15px;font-weight:400;color:#000;letter-spacing:0.185px;">MaChungChi</span>
<svg class="a" style="left:315px;top:173px" width="7" height="11"><use href="#pk"/></svg><div class="rh" style="left:306px;top:190px"></div><div class="rs" style="left:306px;top:212px;width:206px"></div><span class="t" style="left:332.60px;top:194.00px;font-size:12px;line-height:15px;font-weight:400;color:#000;letter-spacing:0.207px;">TenChungChi</span>
<div class="vs" style="left:325px;top:167px;height:46px"></div><div class="vs" style="left:512px;top:167px;height:46px;background:#ececec"></div>
<div class="tbl" style="left:564px;top:234px;width:225px;height:179px"></div><span class="t" style="left:573.50px;top:244.00px;font-size:15.4px;line-height:19px;font-weight:700;color:#000;letter-spacing:0.511px;">PhieuThuHocPhi</span>
<div class="grid" style="left:571px;top:262px;width:211px;height:144px"></div><div class="rh rh1" style="left:573px;top:264px"></div><div class="rs" style="left:573px;top:286px;width:206px"></div><span class="t" style="left:599.60px;top:268.00px;font-size:12px;line-height:15px;font-weight:400;color:#000;letter-spacing:-0.239px;">SoPhieu</span>
<svg class="a" style="left:582px;top:270px" width="7" height="11"><use href="#pk"/></svg><div class="rh" style="left:573px;top:287px"></div><div class="rs" style="left:573px;top:309px;width:206px"></div><span class="t" style="left:599.60px;top:291.00px;font-size:12px;line-height:15px;font-weight:400;color:#000;letter-spacing:0.088px;">MaHocVien</span>
<div class="rh" style="left:573px;top:310px"></div><div class="rs" style="left:573px;top:332px;width:206px"></div><span class="t" style="left:599.60px;top:314.00px;font-size:12px;line-height:15px;font-weight:400;color:#000;letter-spacing:0.179px;">MaLop</span>
<div class="rh" style="left:573px;top:333px"></div><div class="rs" style="left:573px;top:355px;width:206px"></div><span class="t" style="left:599.60px;top:337.00px;font-size:12px;line-height:15px;font-weight:400;color:#000;letter-spacing:0.206px;">NgayNopHocPhi</span>
<div class="rh" style="left:573px;top:356px"></div><div class="rs" style="left:573px;top:378px;width:206px"></div><span class="t" style="left:599.60px;top:360.00px;font-size:12px;line-height:15px;font-weight:400;color:#000;letter-spacing:0.034px;">SoTienNop</span>
<div class="vs" style="left:592px;top:264px;height:115px"></div><div class="vs" style="left:779px;top:264px;height:115px;background:#ececec"></div>
<div class="tbl" style="left:252px;top:307px;width:216px;height:131px"></div><span class="t" style="left:261.80px;top:317.00px;font-size:15.4px;line-height:19px;font-weight:700;color:#000;letter-spacing:0.276px;">HocVien_LopHoc</span>
<div class="grid" style="left:259px;top:335px;width:202px;height:96px"></div><div class="rh rh1" style="left:261px;top:337px"></div><div class="rs" style="left:261px;top:359px;width:197px"></div><span class="t" style="left:287.60px;top:341.00px;font-size:12px;line-height:15px;font-weight:400;color:#000;letter-spacing:0.087px;">MaHocVien</span>
<svg class="a" style="left:270px;top:343px" width="7" height="11"><use href="#pk"/></svg><div class="rh" style="left:261px;top:360px"></div><div class="rs" style="left:261px;top:382px;width:197px"></div><span class="t" style="left:287.60px;top:364.00px;font-size:12px;line-height:15px;font-weight:400;color:#000;letter-spacing:0.179px;">MaLop</span>
<svg class="a" style="left:270px;top:366px" width="7" height="11"><use href="#pk"/></svg><div class="rh" style="left:261px;top:383px"></div><div class="rs" style="left:261px;top:405px;width:197px"></div><span class="t" style="left:287.60px;top:387.00px;font-size:12px;line-height:15px;font-weight:400;color:#000;letter-spacing:-0.070px;">NgayGhiDanh</span>
<div class="vs" style="left:280px;top:337px;height:69px"></div><div class="vs" style="left:458px;top:337px;height:69px;background:#ececec"></div>
<div class="tbl" style="left:286px;top:517px;width:226px;height:162px"></div><span class="t" style="left:295.70px;top:527.00px;font-size:15.4px;line-height:19px;font-weight:700;color:#000;letter-spacing:0.798px;">HocVien</span>
<div class="grid" style="left:293px;top:545px;width:212px;height:127px"></div><div class="rh rh1" style="left:295px;top:547px"></div><div class="rs" style="left:295px;top:569px;width:207px"></div><span class="t" style="left:321.60px;top:551.00px;font-size:12px;line-height:15px;font-weight:400;color:#000;letter-spacing:0.110px;">MaHocVien</span>
<svg class="a" style="left:304px;top:553px" width="7" height="11"><use href="#pk"/></svg><div class="rh" style="left:295px;top:570px"></div><div class="rs" style="left:295px;top:592px;width:207px"></div><span class="t" style="left:321.60px;top:574.00px;font-size:12px;line-height:15px;font-weight:400;color:#000;letter-spacing:0.422px;">HoTen</span>
<div class="rh" style="left:295px;top:593px"></div><div class="rs" style="left:295px;top:615px;width:207px"></div><span class="t" style="left:321.60px;top:597.00px;font-size:12px;line-height:15px;font-weight:400;color:#000;letter-spacing:-0.041px;">NgaySinh</span>
<div class="rh" style="left:295px;top:616px"></div><div class="rs" style="left:295px;top:638px;width:207px"></div><span class="t" style="left:321.60px;top:620.00px;font-size:12px;line-height:15px;font-weight:400;color:#000;letter-spacing:0.181px;">GioiTinh</span>
<div class="rh" style="left:295px;top:639px"></div><div class="rs" style="left:295px;top:661px;width:207px"></div><span class="t" style="left:321.60px;top:643.00px;font-size:12px;line-height:15px;font-weight:400;color:#000;letter-spacing:0.067px;">NoiSinh</span>
<div class="vs" style="left:314px;top:547px;height:115px"></div><div class="vs" style="left:502px;top:547px;height:115px;background:#ececec"></div>
<svg class="a" style="left:0;top:0" width="1280" height="768" shape-rendering="crispEdges"><defs><g id="infh"><path d="M1 3.500 L3.500 1 L5.500 1 L8 3.500 L5.500 6 L3.500 6z M8.500 3.500 L11 1 L13 1 L15.500 3.500 L13 6 L11 6z" fill="#fff"/><rect x="3" y="0" width="3" height="1" fill="#000"/><rect x="11" y="0" width="2" height="1" fill="#000"/><rect x="1" y="1" width="2" height="1" fill="#000"/><rect x="6" y="1" width="2" height="1" fill="#000"/><rect x="9" y="1" width="2" height="1" fill="#000"/><rect x="13" y="1" width="2" height="1" fill="#000"/><rect x="0" y="2" width="1" height="1" fill="#000"/><rect x="8" y="2" width="1" height="1" fill="#000"/><rect x="15" y="2" width="1" height="1" fill="#000"/><rect x="0" y="3" width="1" height="1" fill="#000"/><rect x="8" y="3" width="1" height="1" fill="#000"/><rect x="15" y="3" width="1" height="1" fill="#000"/><rect x="0" y="4" width="1" height="1" fill="#000"/><rect x="8" y="4" width="1" height="1" fill="#000"/><rect x="15" y="4" width="1" height="1" fill="#000"/><rect x="1" y="5" width="2" height="1" fill="#000"/><rect x="6" y="5" width="2" height="1" fill="#000"/><rect x="9" y="5" width="2" height="1" fill="#000"/><rect x="13" y="5" width="2" height="1" fill="#000"/><rect x="3" y="6" width="3" height="1" fill="#000"/><rect x="11" y="6" width="2" height="1" fill="#000"/></g><g id="keyr"><path d="M2.500 0.500 H6.500 L8.500 2.500 V3.500 H15.500 V4.500 L13.600 7 L12.600 5.600 L11.300 7.200 L9.800 5.200 L8.500 6 V6.500 L6.500 8.500 H2.500 L0.500 6.500 V2.500z" fill="#ffff00" stroke="#000" stroke-width="1" stroke-linejoin="miter"/><rect x="3" y="4" width="3" height="1" fill="#1a1a00"/></g></defs><rect x="250" y="220" width="32" height="1" fill="#a6a6a6"/><rect x="250" y="221" width="32" height="1" fill="#ffffff"/><rect x="250" y="222" width="32" height="1" fill="#f4f4f4"/><rect x="250" y="223" width="32" height="1" fill="#9a9a9a"/><rect x="250" y="224" width="32" height="1" fill="#6c6c6c"/><use href="#infh" x="233" y="219"/><g transform="translate(282,218)" shape-rendering="auto"><use href="#keyr"/></g><rect x="122" y="336" width="68" height="5" fill="#686868"/><rect x="185" y="336" width="5" height="25" fill="#686868"/><rect x="185" y="356" width="51" height="5" fill="#686868"/><rect x="122" y="337" width="65" height="1" fill="#fff"/><rect x="186" y="337" width="1" height="21" fill="#fff"/><rect x="186" y="357" width="50" height="1" fill="#fff"/><g transform="translate(236,355)"><use href="#infh"/></g><g transform="matrix(0,-1,1,0,117,339)" shape-rendering="auto"><use href="#keyr"/></g><rect x="484" y="317" width="36" height="1" fill="#a6a6a6"/><rect x="484" y="318" width="36" height="1" fill="#ffffff"/><rect x="484" y="319" width="36" height="1" fill="#f4f4f4"/><rect x="484" y="320" width="36" height="1" fill="#9a9a9a"/><rect x="484" y="321" width="36" height="1" fill="#6c6c6c"/><rect x="515" y="320" width="11" height="1" fill="#a6a6a6"/><rect x="515" y="321" width="11" height="1" fill="#ffffff"/><rect x="515" y="322" width="11" height="1" fill="#f4f4f4"/><rect x="515" y="323" width="11" height="1" fill="#9a9a9a"/><rect x="515" y="324" width="11" height="1" fill="#6c6c6c"/><rect x="522" y="322" width="26" height="1" fill="#a6a6a6"/><rect x="522" y="323" width="26" height="1" fill="#ffffff"/><rect x="522" y="324" width="26" height="1" fill="#f4f4f4"/><rect x="522" y="325" width="26" height="1" fill="#9a9a9a"/><rect x="522" y="326" width="26" height="1" fill="#6c6c6c"/><rect x="522" y="322" width="4" height="1" fill="#f4f4f4"/><rect x="515" y="320" width="1" height="5" fill="#8a8a8a"/><rect x="521" y="325" width="1" height="2" fill="#8a8a8a"/><rect x="519" y="317" width="1" height="3" fill="#555"/><rect x="525" y="320" width="1" height="3" fill="#555"/><rect x="515" y="317" width="4" height="5" fill="none"/><g transform="translate(565,321) scale(-1,1)"><use href="#infh"/></g><g transform="translate(484,315) scale(-1,1)" shape-rendering="auto"><use href="#keyr"/></g><rect x="295" y="455" width="1" height="48" fill="#a6a6a6"/><rect x="296" y="455" width="1" height="48" fill="#ffffff"/><rect x="297" y="455" width="1" height="48" fill="#f4f4f4"/><rect x="298" y="455" width="1" height="48" fill="#9a9a9a"/><rect x="299" y="455" width="1" height="48" fill="#6c6c6c"/><g transform="matrix(0,1,1,0,294,438)"><use href="#infh"/></g><g transform="matrix(0,1,1,0,293,502)" shape-rendering="auto"><use href="#keyr"/></g></svg>
<svg class="a" style="left:0;top:0" width="1280" height="768"><rect x="1257" y="124" width="17" height="586" fill="url(#chk)"/><rect x="6" y="710" width="1251" height="17" fill="url(#chk)"/></svg>
<div class="sbtn" style="left:1257px;top:124px"></div><svg class="a" style="left:1257px;top:124px" width="17" height="17"><path d="M8.500 6.800L12.200 11H4.800z" fill="#000"/></svg>
<div class="sbtn" style="left:1257px;top:693px"></div><svg class="a" style="left:1257px;top:693px" width="17" height="17"><path d="M4.800 7H12.200L8.500 11.200z" fill="#000"/></svg>
<div class="sbtn" style="left:6px;top:710px"></div><svg class="a" style="left:6px;top:710px" width="17" height="17"><path d="M11 4.800V12.200L6.800 8.500z" fill="#000"/></svg>
<div class="sbtn" style="left:1240px;top:710px"></div><svg class="a" style="left:1240px;top:710px" width="17" height="17"><path d="M7 4.800V12.200L11.200 8.500z" fill="#000"/></svg>
<div class="sbtn" style="left:1257px;top:141px;height:458px"></div>
<div class="sbtn" style="left:182px;top:710px;width:1058px"></div>
<div class="a" style="left:1257px;top:710px;width:17px;height:17px;background:#fff"></div>
<svg class="a" style="left:1257px;top:710px" width="17" height="17"><path d="M8.500 1 v15 M1 8.500 h15" stroke="#000" stroke-width="2"/><path d="M8.500 0 l2.500 3 h-5z M8.500 17 l2.500 -3 h-5z M0 8.500 l3 -2.500 v5z M17 8.500 l-3 -2.500 v5z" fill="#000"/></svg>
<div class="a" style="left:0;top:737px;width:1280px;height:24px;background:#293955"></div>
<span class="t" style="left:4.00px;top:742.00px;font-size:12px;line-height:15px;font-weight:400;color:#fff;letter-spacing:-0.438px;">Ready</span>
<div class="a" style="left:0;top:760px;width:1280px;height:8px;background:linear-gradient(90deg,#2f6fa3 0,#23669a 60px,#1f6096 120px,#2a76ad 200px,#2b78b0 400px,#2876b0 640px,#2f80bb 895px,#8ec0e6 918px,#2c7ab4 940px,#1c5f98 1010px,#154c82 1100px,#123f72 1250px,#123f72 1280px)"></div>
<div class="a" style="left:0;top:759px;width:1280px;height:1px;background:#1b2740"></div>
<div class="a" style="left:0;top:760px;width:1280px;height:1px;background:#0e1a2c"></div>
<div class="a" style="left:0;top:761px;width:1280px;height:1px;background:rgba(150,195,232,.5)"></div>
<div class="a" style="left:12px;top:762px;width:29px;height:12px;background:#6e8fae;border-radius:15px 15px 0 0;border:1.500px solid #b9cadb;box-sizing:border-box"></div>
<div class="a" style="left:60px;top:761px;width:58px;height:7px;background:linear-gradient(90deg,#93bbd9 0,#6aa5cf 60%,#5a9bc9 100%);border:1px solid #d3e6f4;border-bottom:none;border-radius:2px 2px 0 0;box-sizing:border-box"></div>
<div class="a" style="left:80px;top:765px;width:18px;height:6px;background:#e2483a;border-radius:9px 9px 0 0"></div>
<div class="a" style="left:122px;top:761px;width:58px;height:7px;background:linear-gradient(90deg,#cfe5f3 0,#bddaed 100%);border:1px solid #f1f9fe;border-bottom:none;border-radius:2px 2px 0 0;box-sizing:border-box"></div>
<div class="a" style="left:136px;top:764px;width:9px;height:4px;background:#ecd37a;border-radius:4px 4px 0 0/2px 2px 0 0;border-top:1px solid #c9a43a;box-sizing:border-box"></div>
<div class="a" style="left:150px;top:765px;width:11px;height:1px;background:repeating-linear-gradient(90deg,#2e8b2e 0,#2e8b2e 2px,transparent 2px,transparent 3px)"></div>
<div class="a" style="left:1266px;top:761px;width:14px;height:7px;background:linear-gradient(#9fb4c8,#7f9cba);border-left:1px solid #b8cde0"></div>
</body></html>
